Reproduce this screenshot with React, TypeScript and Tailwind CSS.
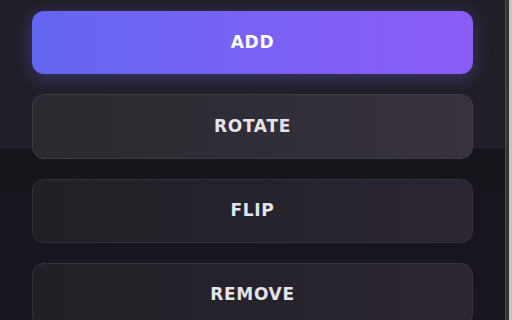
import React from "react";

const font = { fontFamily: "'DejaVu Sans', 'Noto Sans', sans-serif" };

export default function App() {
  return (
    <div
      className="flex h-[320px] w-[512px] overflow-hidden bg-[linear-gradient(to_bottom,#221f28_0px,#211e27_149px,#17141c_149px,#1a1620_320px)]"
      style={font}
    >
      <div className="flex w-[505px] shrink-0 flex-col gap-5 px-8 pt-[11px]">
        <button className="flex h-[63px] w-full shrink-0 items-center justify-center rounded-xl bg-gradient-to-r from-[#6366f1] to-[#8b5cf6] text-[17px] font-bold tracking-[0.04em] text-white shadow-[0_4px_18px_rgba(99,102,241,0.35)]">
          ADD
        </button>
        <button className="flex h-[65px] w-full shrink-0 items-center justify-center rounded-xl border border-[#3f3b47] bg-gradient-to-r from-[#2c2930] to-[#37323d] text-[17px] font-bold tracking-[0.04em] text-[#e4e4e9]">
          ROTATE
        </button>
        <button className="flex h-[64px] w-full shrink-0 items-center justify-center rounded-xl border border-[#36323d] bg-gradient-to-r from-[#221f26] to-[#2b2632] text-[17px] font-bold tracking-[0.04em] text-[#e4e4e9]">
          FLIP
        </button>
        <button className="flex h-[64px] w-full shrink-0 items-center justify-center rounded-xl border border-[#36323d] bg-gradient-to-r from-[#221f26] to-[#2b2632] text-[17px] font-bold tracking-[0.04em] text-[#e4e4e9]">
          REMOVE
        </button>
      </div>
      <div className="flex w-[7px] shrink-0">
        <div className="w-[4px] border-l border-[#4a4a4a] bg-[#333333]" />
        <div className="w-[3px] bg-[#c4c4c4]" />
      </div>
    </div>
  );
}
